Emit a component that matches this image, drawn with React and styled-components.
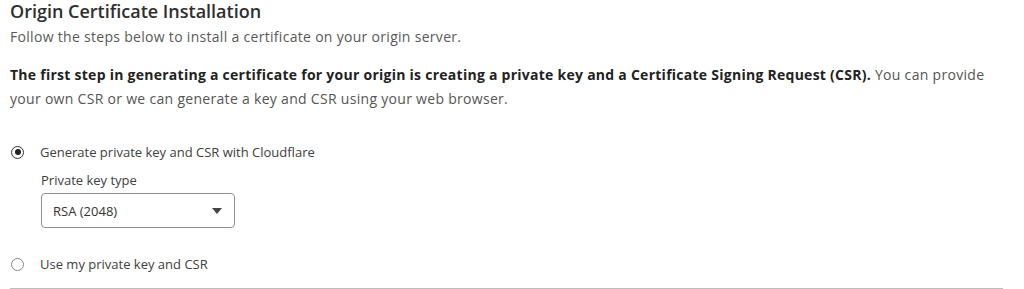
import React, { useState } from 'react'
import styled, { createGlobalStyle } from 'styled-components'

const GlobalStyle = createGlobalStyle`
    body {
        margin: 0;
        background: #fff;
        font-family: "Segoe UI", "Open Sans", sans-serif;
        color: #333;
    }
`;

const Page = styled.div`
    width: 993px;
    padding: 0 0 0 10px;
    display: flex;
    flex-direction: column;
`;

const Title = styled.h2`
    margin: 0;
    font-size: 18px;
    font-weight: 600;
    line-height: 22px;
    color: #2e2e2e;
`;

const Subtitle = styled.p`
    margin: 3px 0 0;
    font-size: 14px;
    line-height: 24px;
    letter-spacing: 0.3px;
    color: #595959;
`;

const Intro = styled.p`
    margin: 14px 0 0;
    padding-right: 5px;
    font-size: 14px;
    line-height: 24px;
    letter-spacing: 0.3px;
    color: #555;
    & strong {
        color: #222;
        font-weight: 700;
        letter-spacing: 0.26px;
    }
`;

const Options = styled.div`
    display: flex;
    flex-direction: column;
    margin-top: 31px;
`;

const Option = styled.label`
    display: flex;
    align-items: center;
    gap: 16px;
    margin-top: ${(p) => p.$offset || 0}px;
    font-size: 13px;
    line-height: 20px;
    color: #404040;
    cursor: pointer;
`;

const Radio = styled.span`
    width: 13px;
    height: 13px;
    box-sizing: border-box;
    margin-left: 1px;
    border-radius: 50%;
    border: 1.5px solid ${(p) => (p.$checked ? '#333' : '#8a8a8a')};
    display: flex;
    align-items: center;
    justify-content: center;
    flex-shrink: 0;
    &::after {
        content: '';
        width: 6px;
        height: 6px;
        border-radius: 50%;
        background: ${(p) => (p.$checked ? '#222' : 'transparent')};
    }
`;

const SubField = styled.div`
    display: flex;
    flex-direction: column;
    padding-left: 31px;
    margin-top: 8px;
    gap: 3px;
`;

const FieldLabel = styled.span`
    font-size: 13px;
    line-height: 20px;
    color: #404040;
`;

const Select = styled.div`
    width: 194px;
    height: 35px;
    box-sizing: border-box;
    border: 1px solid #8f8f8f;
    border-radius: 4px;
    display: flex;
    align-items: center;
    justify-content: space-between;
    padding: 0 12px 0 11px;
    font-size: 13px;
    color: #333;
`;

const Caret = styled.span`
    width: 0;
    height: 0;
    border-left: 5px solid transparent;
    border-right: 5px solid transparent;
    border-top: 6px solid #444;
`;

const Divider = styled.hr`
    margin: 14px 0 0;
    border: none;
    border-top: 1px solid #bdbdbd;
`;

export default function App() {
    const [mode, setMode] = useState('cloudflare')

    return (
        <>
            <GlobalStyle />
            <Page>
                <Title>Origin Certificate Installation</Title>
                <Subtitle>Follow the steps below to install a certificate on your origin server.</Subtitle>
                <Intro>
                    <strong>The first step in generating a certificate for your origin is creating a private key and a Certificate Signing Request (CSR).</strong>{' '}
                    You can provide your own CSR or we can generate a key and CSR using your web browser.
                </Intro>
                <Options>
                    <Option onClick={() => setMode('cloudflare')}>
                        <Radio $checked={mode === 'cloudflare'} />
                        Generate private key and CSR with Cloudflare
                    </Option>
                    {mode === 'cloudflare' && (
                        <SubField>
                            <FieldLabel>Private key type</FieldLabel>
                            <Select>
                                RSA (2048)
                                <Caret />
                            </Select>
                        </SubField>
                    )}
                    <Option $offset={26} onClick={() => setMode('own')}>
                        <Radio $checked={mode === 'own'} />
                        Use my private key and CSR
                    </Option>
                </Options>
                <Divider />
            </Page>
        </>
    )
}
